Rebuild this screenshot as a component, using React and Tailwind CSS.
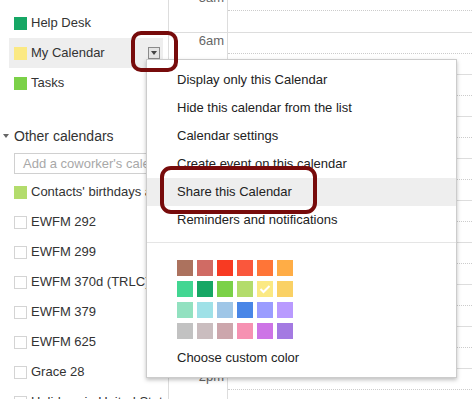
import React from 'react';

const HOURS = ['5am', '6am', '7am', '8am', '9am', '10am', '11am', '12pm', '1pm', '2pm'];

const MENU_ITEMS = [
  'Display only this Calendar',
  'Hide this calendar from the list',
  'Calendar settings',
  'Create event on this calendar',
  'Share this Calendar',
  'Reminders and notifications',
];

const SWATCHES = [
  ['#ac725e', '#d06b64', '#f83a22', '#fa573c', '#ff7537', '#ffad46'],
  ['#42d692', '#16a765', '#7bd148', '#b3dc6c', '#fbe983', '#fad165'],
  ['#92e1c0', '#9fe1e7', '#9fc6e7', '#4986e7', '#9a9cff', '#b99aff'],
  ['#c2c2c2', '#cabdbf', '#cca6ac', '#f691b2', '#cd74e6', '#a47ae2'],
];

const OTHER = [
  'EWFM 292',
  'EWFM 299',
  'EWFM 370d (TRLC)',
  'EWFM 379',
  'EWFM 625',
  'Grace 28',
  'Holidays in United States',
];

const CalRow = ({ color, label, active, children }) => (
  <div className={`flex items-center h-[30px] ml-[9px] w-[154px] pl-[5px] ${active ? 'bg-[#eeeeee]' : ''}`}>
    {color ? (
      <span className="w-[13px] h-[13px] shrink-0" style={{ backgroundColor: color }} />
    ) : (
      <span className="w-[13px] h-[13px] shrink-0 border border-[#d4d4d4] bg-white" />
    )}
    <span className="ml-[4px] whitespace-nowrap text-[#333]">{label}</span>
    {children}
  </div>
);

const Sidebar = () => (
  <div className="w-[168px] shrink-0 pt-[8px] overflow-hidden">
    <CalRow color="#16a765" label="Help Desk" />
    <CalRow color="#fbe983" label="My Calendar" active>
      <span className="ml-auto mr-[3px] w-[12px] h-[12px] border border-[#8a8a8a] bg-[#e4e4e4] flex items-center justify-center">
        <span className="w-0 h-0 border-l-[3px] border-r-[3px] border-t-[4px] border-l-transparent border-r-transparent border-t-[#444]" />
      </span>
    </CalRow>
    <CalRow color="#7bd148" label="Tasks" />

    <div className="flex items-center mt-[28px] h-[20px]">
      <span className="ml-[3px] w-0 h-0 border-l-[3px] border-r-[3px] border-t-[4px] border-l-transparent border-r-transparent border-t-[#666]" />
      <span className="ml-[5px] text-[#333] text-[14px]">Other calendars</span>
    </div>
    <div className="ml-[14px] mt-[7px] h-[21px] w-[200px] border border-[#d0d0d0] flex items-center pl-[8px] text-[#a8a8a8] whitespace-nowrap">
      Add a coworker's calendar
    </div>
    <div className="mt-[3px]">
      <CalRow color="#b3dc6c" label="Contacts' birthdays and events" />
      {OTHER.map((name) => (
        <CalRow key={name} label={name} />
      ))}
    </div>
  </div>
);

const TimeGrid = () => (
  <div className="flex-1 -mt-[10px]">
    {HOURS.map((h, i) => (
      <div key={h} className={`flex h-[42px] ${i > 0 ? 'border-t border-[#dddddd]' : ''}`}>
        <div className="w-[60px] shrink-0 border-l border-r border-[#dddddd] text-right pr-[3px] text-[#666] leading-[16px]">
          {h}
        </div>
        <div className="flex-1">
          <div className="h-[21px] border-b border-dotted border-[#cccccc]" />
        </div>
      </div>
    ))}
  </div>
);

const Menu = () => (
  <div className="absolute left-[146px] top-[59px] w-[311px] h-[319px] bg-white border border-[#cccccc] shadow-[0_2px_4px_rgba(0,0,0,0.25)] pt-[6px] text-[#222]">
    {MENU_ITEMS.map((item) => (
      <div
        key={item}
        className={`h-[28px] flex items-center pl-[30px] whitespace-nowrap ${item === 'Share this Calendar' ? 'bg-[#eeeeee]' : ''}`}
      >
        {item}
      </div>
    ))}
    <div className="mt-[8px] border-t border-[#e5e5e5]" />
    <div className="pl-[30px] pt-[17px] flex flex-col gap-[5px]">
      {SWATCHES.map((row, r) => (
        <div key={r} className="flex gap-[4px]">
          {row.map((c) => (
            <div key={c} className="w-[16px] h-[16px] flex items-center justify-center" style={{ backgroundColor: c }}>
              {c === '#fbe983' && (
                <svg width="12" height="10" viewBox="0 0 12 10">
                  <path d="M1.5 5 L4.5 8 L10.5 2" fill="none" stroke="#fff" strokeWidth="2" />
                </svg>
              )}
            </div>
          ))}
        </div>
      ))}
    </div>
    <div className="pl-[30px] mt-[11px] h-[16px] flex items-center">Choose custom color</div>
  </div>
);

export default function App() {
  return (
    <div className="relative w-[472px] h-[399px] overflow-hidden bg-white flex text-[13px] font-['Liberation_Sans',Arial,sans-serif]">
      <Sidebar />
      <TimeGrid />
      <Menu />
      <div className="absolute left-[131px] top-[31px] w-[47px] h-[41px] border-[4px] border-[#770b0b] rounded-[10px]" />
      <div className="absolute left-[160px] top-[166px] w-[157px] h-[48px] border-[4px] border-[#770b0b] rounded-[11px]" />
    </div>
  );
}
